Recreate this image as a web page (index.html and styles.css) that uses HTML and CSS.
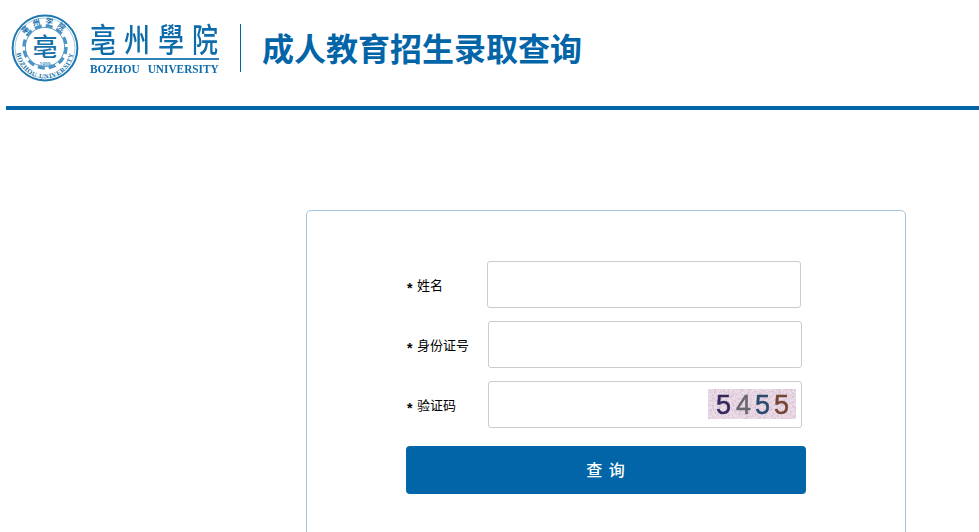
FILE: index.html
```html
<!DOCTYPE html>
<html lang="zh-CN">
<head>
    <meta charset="UTF-8">
    <meta name="viewport" content="width=device-width, initial-scale=1.0">
    <title>成人教育招生录取查询</title>
    <link rel="stylesheet" href="styles.css">
</head>
<body>
    <header class="top">
        <svg class="seal" width="68" height="68" viewBox="0 0 68 68">
            <defs>
                <path id="sealTop" d="M8 36 A26 26 0 0 1 60 36"/>
                <path id="sealBottom" d="M5.5 36 A28.5 28.5 0 0 0 62.5 36"/>
            </defs>
            <circle cx="34" cy="34" r="32.4" fill="none" stroke="#1f78b0" stroke-width="2"/>
            <circle cx="34" cy="34" r="30" fill="none" stroke="#8dbcd8" stroke-width="0.8"/>
            <circle cx="34" cy="33" r="21" fill="none" stroke="#4a93c2" stroke-width="3.4" stroke-dasharray="7 4"/>
            <circle cx="34" cy="33" r="19.6" fill="#fff" stroke="#4a93c2" stroke-width="0.9"/>
            <text class="seal-cn"><textPath href="#sealTop" startOffset="50%" text-anchor="middle">亳州学院</textPath></text>
            <text class="seal-en"><textPath href="#sealBottom" startOffset="50%" text-anchor="middle">BOZHOU UNIVERSITY</textPath></text>
            <text class="seal-mark" x="34" y="42" text-anchor="middle">亳</text>
            <text class="seal-year" x="34" y="52" text-anchor="middle">-1909-</text>
        </svg>
        <div class="wordmark">
            <div class="wordmark-rule"><span class="wordmark-cn">亳州學院</span></div>
            <div class="wordmark-en">BOZHOU UNIVERSITY</div>
        </div>
        <h1>成人教育招生录取查询</h1>
    </header>

    <main class="card">
        <form class="query-form">
            <div class="row row-first">
                <label class="field-label"><span class="star">*</span>姓名</label>
                <input class="field-input" type="text">
            </div>
            <div class="row">
                <label class="field-label"><span class="star">*</span>身份证号</label>
                <input class="field-input" type="text">
            </div>
            <div class="row">
                <label class="field-label"><span class="star">*</span>验证码</label>
                <div class="captcha-wrap">
                    <input class="field-input" type="text">
                    <svg class="captcha" width="88" height="30" viewBox="0 0 88 30">
                        <defs>
                            <filter id="speckle" x="0" y="0" width="100%" height="100%">
                                <feTurbulence type="fractalNoise" baseFrequency="0.45" numOctaves="2" seed="4"/>
                                <feColorMatrix values="0 0 0 0 0.72  0 0 0 0 0.52  0 0 0 0 0.66  3 0 0 0 -1.2"/>
                            </filter>
                        </defs>
                        <rect width="88" height="30" fill="#eadfe8"/>
                        <rect width="88" height="30" filter="url(#speckle)"/>
                        <g class="captcha-digits">
                            <text x="8" y="25" fill="#35265c" stroke="#35265c">5</text>
                            <text x="28" y="25" fill="#6a676c" stroke="#6a676c">4</text>
                            <text x="47" y="25" fill="#2a4a6c" stroke="#2a4a6c">5</text>
                            <text x="66" y="25" fill="#754434" stroke="#754434">5</text>
                        </g>
                    </svg>
                </div>
            </div>
            <button class="submit" type="button">查 询</button>
        </form>
    </main>
</body>
</html>
```

FILE: styles.css
```css
html, body {
    height: 532px;
    overflow: hidden;
}
body {
    margin: 0;
    background-color: #fff;
    color: #000;
    font-family: "Liberation Sans", "Noto Sans CJK SC", sans-serif;
}
.top {
    display: flex;
    align-items: flex-start;
    height: 106px;
    margin-left: 6px;
    border-bottom: 4px solid #0265a8;
}
.seal {
    flex: none;
    margin: 14px 0 0 5px;
}
.seal-cn {
    font-family: "Noto Sans CJK SC", sans-serif;
    font-size: 7.5px;
    font-weight: bold;
    letter-spacing: 4.5px;
    fill: #1670aa;
}
.seal-en {
    font-family: "Liberation Serif", serif;
    font-size: 6.5px;
    font-weight: bold;
    letter-spacing: 0.7px;
    fill: #1670aa;
}
.seal-mark {
    font-family: "Noto Sans CJK SC", sans-serif;
    font-size: 25px;
    font-weight: 500;
    fill: #1670aa;
}
.seal-year {
    font-family: "Liberation Sans", sans-serif;
    font-size: 5px;
    font-weight: bold;
    fill: #4a93c2;
}
.wordmark {
    flex: none;
    width: 129px;
    margin: 21px 0 0 11px;
}
.wordmark-rule {
    height: 37px;
    border-bottom: 2px solid #2f83b8;
}
.wordmark-cn {
    display: inline-block;
    font-family: "Noto Sans CJK SC", sans-serif;
    font-size: 26px;
    font-weight: 500;
    line-height: 27px;
    letter-spacing: 8px;
    white-space: nowrap;
    color: #0f6cab;
    transform: scaleY(1.25);
    transform-origin: left top;
}
.wordmark-en {
    margin-top: 2px;
    font-family: "Liberation Serif", serif;
    font-size: 13px;
    font-weight: bold;
    line-height: 14px;
    word-spacing: 6px;
    white-space: nowrap;
    color: #0f6cab;
    transform: scaleX(0.87);
    transform-origin: left top;
}
h1 {
    margin: 24px 0 0 21px;
    padding-left: 21px;
    height: 48px;
    border-left: 1px solid #0265a8;
    font-size: 32px;
    font-weight: bold;
    line-height: 52px;
    white-space: nowrap;
    color: #0265a8;
}
.card {
    box-sizing: border-box;
    width: 600px;
    height: 400px;
    margin: 100px 0 0 306px;
    border: 1px solid #a3c6de;
    border-radius: 5px;
}
.query-form {
    width: 400px;
    margin: 50px 0 0 99px;
}
.row {
    display: flex;
    align-items: center;
    margin-bottom: 13px;
}
.row-first {
    margin-left: -1px;
}
.field-label {
    flex: none;
    box-sizing: border-box;
    width: 82px;
    padding: 2px 0 0 1px;
    font-size: 13px;
    line-height: 20px;
}
.row-first .field-label {
    padding-left: 2px;
}
.star {
    display: inline-block;
    width: 10px;
    font-size: 14px;
    font-weight: bold;
    line-height: 14px;
    vertical-align: -3px;
}
.field-input {
    box-sizing: border-box;
    width: 314px;
    height: 47px;
    padding: 0 10px;
    border: 1px solid #ccc;
    border-radius: 3px;
    background-color: #fff;
}
.captcha-wrap {
    position: relative;
}
.captcha-wrap .field-input {
    display: block;
}
.captcha {
    position: absolute;
    top: 8px;
    right: 6px;
}
.captcha-digits {
    font-family: "Liberation Sans", sans-serif;
    font-size: 27px;
    stroke-width: 0.5px;
    filter: blur(0.5px);
}
.submit {
    display: block;
    width: 400px;
    height: 48px;
    margin-top: 18px;
    padding: 0 0 2px;
    border: none;
    border-radius: 4px;
    background-color: #0265a8;
    color: #fff;
    font-family: "Noto Sans CJK SC", sans-serif;
    font-size: 16px;
    font-weight: 500;
    letter-spacing: 1px;
    word-spacing: 1px;
    cursor: pointer;
}
```
